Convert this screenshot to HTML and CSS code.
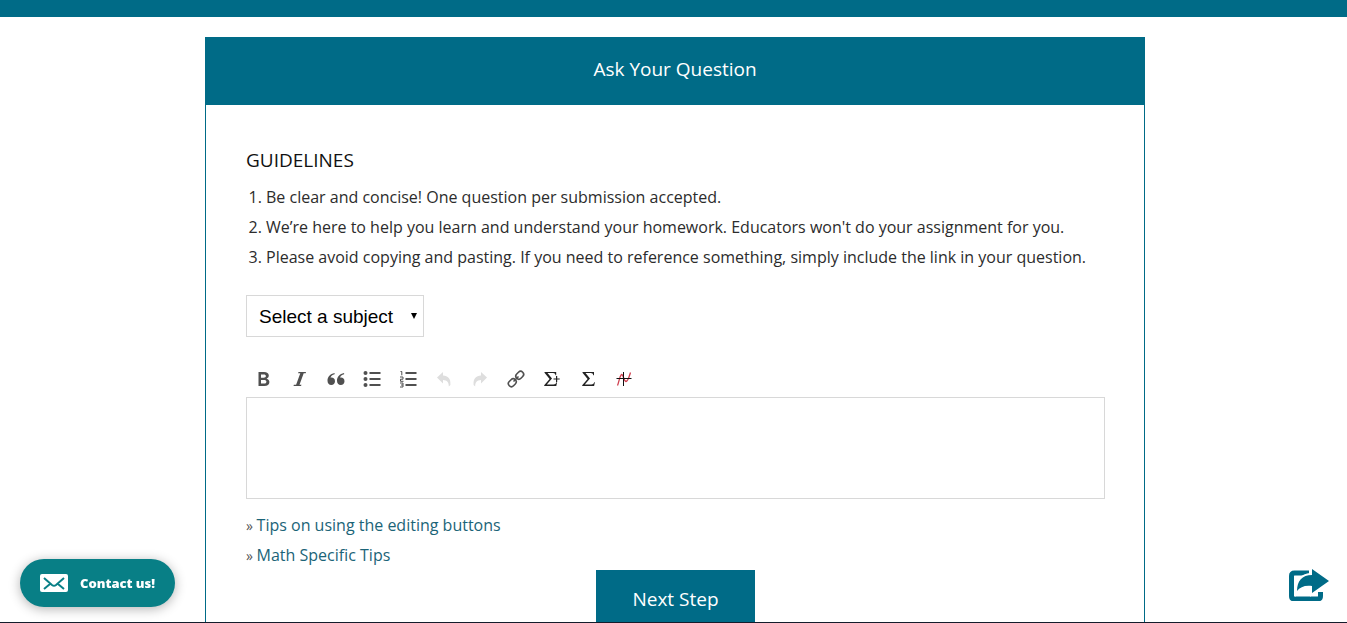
FILE: index.html
```html
<!DOCTYPE html>
<html lang="en">
<head>
<meta charset="utf-8">
<title>Ask Your Question</title>
<link rel="stylesheet" href="styles.css">
</head>
<body>
<div class="topbar"></div>
<div class="page">
<main class="card">
  <h1 class="card-title">Ask Your Question</h1>
  <form class="card-body">
    <h2 class="guidelines-title">GUIDELINES</h2>
    <ol class="guidelines">
      <li>Be clear and concise! One question per submission accepted.</li>
      <li>We’re here to help you learn and understand your homework. Educators won't do your assignment for you.</li>
      <li>Please avoid copying and pasting. If you need to reference something, simply include the link in your question.</li>
    </ol>
    <div class="select-wrap">
      <select class="subject" aria-label="Subject"><option>Select a subject</option></select>
      <svg class="select-arrow" viewBox="0 0 6 6" aria-hidden="true"><path d="M0 0h6L3 6z"/></svg>
    </div>
    <div class="toolbar" role="toolbar" aria-label="Formatting">
      <button type="button" class="tool" aria-label="Bold"><svg viewBox="0 0 20 20"><path fill-rule="evenodd" d="M4.500 3h5.500c3 0 4.800 1.300 4.800 3.600 0 1.500-.8 2.600-2.200 3.100 1.800.4 2.800 1.600 2.800 3.400 0 2.600-1.900 4-5.100 4H4.500zM7 5.400v3.300h2.700c1.400 0 2.200-.5 2.200-1.700 0-1.100-.8-1.600-2.200-1.600zM7 11v3.600h3c1.500 0 2.400-.5 2.400-1.800 0-1.200-.9-1.800-2.400-1.800z"/></svg></button>
      <button type="button" class="tool" aria-label="Italic"><svg viewBox="0 0 20 20"><path d="M8.500 3H16l-.3 1.300h-2L9.500 15.700h2L11 17H3.500l.4-1.300h2.200L10.300 4.300H8.100z"/></svg></button>
      <button type="button" class="tool" aria-label="Quote"><svg viewBox="0 0 20 20"><path d="M8.600 5.200C6.300 5.800 5 7.100 4.500 8.700c2.500-.5 4.500 1 4.500 3.500C9 14.500 7.400 16 5.300 16 2.900 16 1.500 14.200 1.500 11.700c0-4 2.700-6.900 7.100-7.700zM18.100 5.200c-2.300.6-3.600 1.900-4.100 3.500 2.500-.5 4.500 1 4.500 3.500 0 2.300-1.600 3.800-3.700 3.800-2.400 0-3.800-1.800-3.800-4.300 0-4 2.700-6.900 7.100-7.700z"/></svg></button>
      <button type="button" class="tool" aria-label="Bulleted list"><svg viewBox="0 0 20 20"><circle cx="3.500" cy="4" r="2"/><circle cx="3.500" cy="10" r="2"/><circle cx="3.500" cy="16" r="2"/><path d="M7.500 3h11v2h-11zM7.500 9h11v2h-11zM7.500 15h11v2h-11z"/></svg></button>
      <button type="button" class="tool" aria-label="Numbered list"><svg viewBox="0 0 20 20"><path d="M7.500 3h11v2h-11zM7.500 9h11v2h-11zM7.500 15h11v2h-11z"/><path class="stroke thin" d="M2.500 2.500h1.300v3.800M2 8h3v2.200H2.500v2.100h3M2 14h3v4H2M3 16h2"/></svg></button>
      <button type="button" class="tool faded" aria-label="Undo"><svg viewBox="0 0 20 20"><path d="M3 8.500 9 3v3.500c5 .3 8 3 7.400 9.500l-1.600 1.500c.2-4.200-1.700-6.300-5.800-6.500v3.500z"/></svg></button>
      <button type="button" class="tool faded" aria-label="Redo"><svg viewBox="0 0 20 20"><path d="M17 8.500 11 3v3.500C6 6.800 3 9.500 3.600 16l1.600 1.500C5 13.300 6.900 11.200 11 11v3.500z"/></svg></button>
      <button type="button" class="tool" aria-label="Link"><svg viewBox="0 0 20 20"><g class="stroke link" transform="rotate(-45 10 10)"><rect x="0.500" y="7" width="8.500" height="6" rx="3"/><rect x="11" y="7" width="8.500" height="6" rx="3"/><path d="M6.500 10h7"/></g></svg></button>
      <button type="button" class="tool dark" aria-label="Inline equation"><svg viewBox="0 0 20 20"><path d="M2.500 3h11.700v3.300h-.7c-.3-1.500-.9-2.200-2.500-2.200H5.500L10 9.400 4.800 15.400h6.700c1.600 0 2.400-.7 2.900-2.200h.7L14.300 17H2.200v-.8L7.600 10 2.500 3.800z"/><path d="M14 7h1.200v2.400h2.500v1.200h-2.500V13H14v-2.400h-2.500V9.400H14z"/></svg></button>
      <button type="button" class="tool dark" aria-label="Equation"><svg viewBox="0 0 20 20"><path d="M4.500 3h11.500v3.300h-.7c-.3-1.500-.9-2.200-2.500-2.200H7.500L12 9.400 6.800 15.400h6.500c1.600 0 2.400-.7 2.900-2.200h.7L16.100 17H4.200v-.8L9.600 10 4.500 3.800z"/></svg></button>
      <button type="button" class="tool" aria-label="Graph"><svg viewBox="0 0 20 20"><path class="curve" d="M3.500 16.500C5 13 5.500 7.500 7.500 5.500 9.500 5 9.500 12 12 12.500 14 12.500 15 8 16.500 3.500"/><path class="axis" d="M2.500 9.500h15M9.500 3v14"/></svg></button>
    </div>
    <textarea class="editor" aria-label="Your question"></textarea>
    <ul class="tips">
      <li><a href="#">Tips on using the editing buttons</a></li>
      <li><a href="#">Math Specific Tips</a></li>
    </ul>
    <button type="button" class="next">Next Step</button>
  </form>
</main>
</div>
<button type="button" class="contact">
  <svg viewBox="0 0 28 18" aria-hidden="true"><rect width="28" height="18" rx="2"/><path d="m4 4 8 7c1.300 1 2.700 1 4 0l8-7M4 15l6-5M24 15l-6-5"/></svg>
  Contact us!
</button>
<button type="button" class="share" aria-label="Share"><svg viewBox="0 0 40 32"><path class="frame" d="M20 4H5.500Q2.500 4 2.500 7v20q0 3 3 3h23q3 0 3-3v-4"/><path class="arrow" d="M23 0 40 12 23 24v-7C16 16 11 18 8 22 8 12 13 6 23 6z"/></svg></button>
<div class="edge"></div>
</body>
</html>
```

FILE: styles.css
```css
* { box-sizing: border-box; }
body {
  margin: 0;
  height: 100vh;
  overflow: hidden;
  background: #fff;
  color: #2c2c2c;
  font: 400 16px/30px "Open Sans", sans-serif;
}
button { border: 0; padding: 0; background: none; font-family: inherit; }
.topbar { height: 17px; margin-bottom: 20px; background: #006b87; }
.page { padding: 0 16px 0 19px; }
.card {
  max-width: 940px;
  margin: 0 auto;
  border: 1px solid #006b87;
  border-top: 0;
}
.card-title {
  margin: 0;
  padding: 17px 0 21px;
  background: #006b87;
  color: #fff;
  font-size: 19px;
  font-weight: 400;
  line-height: 30px;
  text-align: center;
}
.card-body { display: flex; flex-direction: column; padding: 40px 39px 40px 40px; }
.guidelines-title { margin: 0 0 7px; color: #111; font-size: 19px; font-weight: 500; line-height: 30px; }
.guidelines { margin: 0 0 23px; padding-left: 20px; }
.select-wrap { position: relative; align-self: flex-start; }
.subject {
  display: block;
  appearance: none;
  width: 178px;
  height: 42px;
  padding: 0 12px;
  border: 1px solid #d8d8d8;
  border-radius: 0;
  background: #fff;
  color: #000;
  font: 400 19px "Liberation Sans", Arial, sans-serif;
}
.select-arrow { position: absolute; right: 7px; top: 18px; width: 6px; height: 6px; pointer-events: none; }
.toolbar { display: flex; margin-top: 24px; }
.tool { display: flex; width: 36px; height: 36px; align-items: center; justify-content: center; }
.tool svg { width: 20px; height: 20px; fill: #505050; }
.tool .stroke { fill: none; stroke: #505050; stroke-width: 2; }
.tool .thin { stroke-width: 1; }
.tool .link { stroke-width: 1.6; }
.faded svg { fill: #dedede; }
.dark svg { fill: #222; }
.tool .curve { fill: none; stroke: #d04050; stroke-width: 1.3; }
.tool .axis { stroke: #111; stroke-width: 1; }
.editor { height: 102px; border: 1px solid #d8d8d8; resize: none; font: inherit; }
.tips { margin: 11px 0 0; padding: 0; list-style: none; }
.tips li::before { content: "» "; color: #555; font-size: 14px; line-height: 1; }
.tips a { color: #1b6478; text-decoration: none; }
.next { align-self: center; width: 159px; height: 58px; background: #006b87; color: #fff; font-size: 19px; }
.contact {
  position: fixed;
  left: 20px;
  bottom: 16px;
  display: flex;
  align-items: center;
  gap: 12px;
  height: 48px;
  padding: 0 20px;
  border-radius: 24px;
  background: #087f86;
  color: #fff;
  font-size: 13px;
  font-weight: 800;
  box-shadow: 0 2px 12px rgba(0, 0, 0, .3);
}
.contact svg { width: 28px; height: 18px; fill: #fff; }
.contact path { fill: none; stroke: #087f86; stroke-width: 2; }
.share { position: fixed; right: 18px; bottom: 22px; }
.share svg { display: block; width: 40px; height: 32px; }
.share .frame { fill: none; stroke: #006b87; stroke-width: 5; }
.share .arrow { fill: #006b87; stroke: #fff; stroke-width: 4; paint-order: stroke; }
.edge { position: fixed; left: 0; right: 0; bottom: 0; height: 1px; background: #141c2b; }
```
